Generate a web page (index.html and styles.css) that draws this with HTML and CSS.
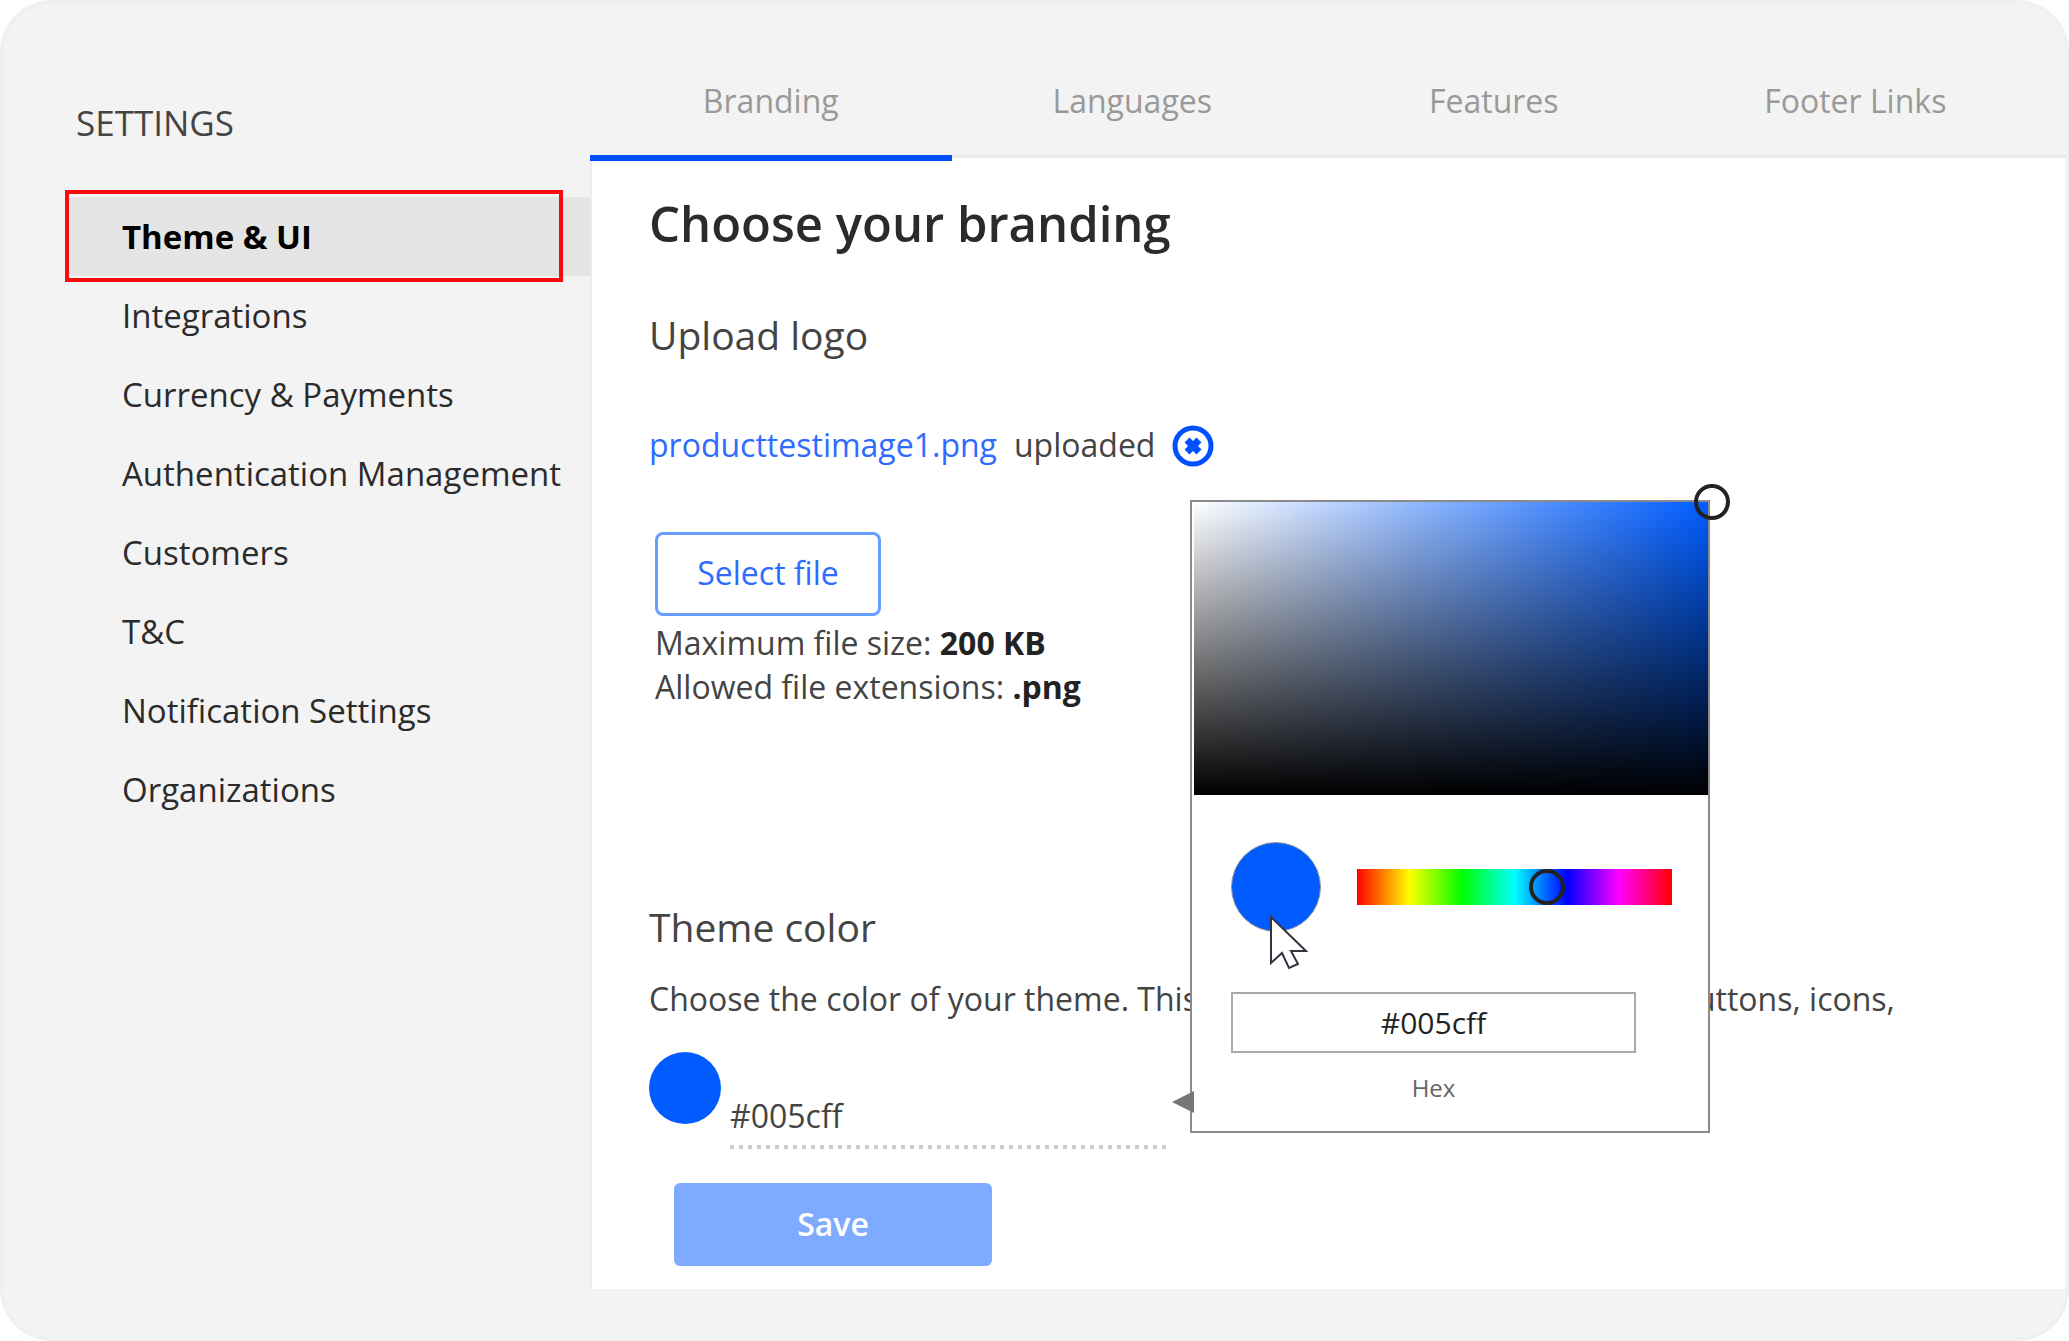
FILE: index.html
```html
<!DOCTYPE html>
<html lang="en">
<head>
    <meta charset="UTF-8">
    <meta name="viewport" content="width=device-width, initial-scale=1.0">
    <title>Settings - Theme &amp; UI</title>
    <link rel="stylesheet" href="styles.css">
</head>
<body>

<div class="page">
    <aside class="sidebar">
        <h2 class="sidebar-title">SETTINGS</h2>
        <nav class="menu">
            <a class="active" href="#theme">Theme &amp; UI</a>
            <a href="#integrations">Integrations</a>
            <a href="#currency">Currency &amp; Payments</a>
            <a href="#authentication">Authentication Management</a>
            <a href="#customers">Customers</a>
            <a href="#terms">T&amp;C</a>
            <a href="#notifications">Notification Settings</a>
            <a href="#organizations">Organizations</a>
        </nav>
    </aside>

    <main class="content">
        <nav class="tabs">
            <a class="active" href="#branding">Branding</a>
            <a href="#languages">Languages</a>
            <a href="#features">Features</a>
            <a href="#footer-links">Footer Links</a>
        </nav>

        <form class="panel">
            <h1>Choose your branding</h1>

            <h3>Upload logo</h3>
            <div class="uploaded">
                <a href="#logo">producttestimage1.png</a>
                <span>uploaded</span>
                <button type="button" class="remove" aria-label="Remove file">
                    <svg viewBox="0 0 42 42" width="42" height="42">
                        <circle cx="21" cy="21" r="18" fill="#fff" stroke="#0050ff" stroke-width="5"/>
                        <path d="M15 15l12 12M27 15L15 27" stroke="#0050ff" stroke-width="7"/>
                    </svg>
                </button>
            </div>
            <div class="upload">
                <button type="button" class="select-file">Select file</button>
                <p>Maximum file size: <strong>200 KB</strong></p>
                <p>Allowed file extensions: <strong>.png</strong></p>
            </div>

            <h3>Theme color</h3>
            <p class="description">Choose the color of your theme. This color will be applied to all main buttons, icons,</p>
            <div class="color-field">
                <button type="button" class="swatch" aria-label="Open color picker"></button>
                <input type="text" class="color-value" value="#005cff" aria-label="Theme color">

                <div class="picker">
                    <div class="shade">
                        <span class="shade-handle"></span>
                    </div>
                    <div class="picker-row">
                        <div class="preview">
                            <svg class="cursor" viewBox="0 0 40 58" width="40" height="58">
                                <path d="M2 2v46l11-10 7 15 9-4-7-13h15z" fill="#fff" stroke="#333340" stroke-width="2"/>
                            </svg>
                        </div>
                        <input type="range" class="hue" min="0" max="360" value="222" aria-label="Hue">
                    </div>
                    <div class="hex">
                        <input type="text" id="hex" value="#005cff">
                        <label for="hex">Hex</label>
                    </div>
                </div>
            </div>

            <button type="submit" class="save">Save</button>
        </form>
    </main>
</div>

</body>
</html>
```
FILE: styles.css
```css
* {
    margin: 0;
    padding: 0;
    box-sizing: border-box;
    font-family: 'Open Sans', sans-serif;
}
body {
    background: #fff;
    color: #444;
    font-size: 32px;
    line-height: 44px;
}
a {
    text-decoration: none;
}
button {
    cursor: pointer;
}
.page {
    display: flex;
    min-height: 100vh;
    padding-bottom: 48px;
    border: 4px solid #f0f0f0;
    border-right-width: 3px;
    border-radius: 52px;
    background: #f3f3f3;
}

/* Sidebar */
.sidebar {
    flex: 0 0 586px;
    padding: 97px 0 0 61px;
}
.sidebar-title {
    padding-left: 11px;
    font-size: 35px;
    font-weight: 400;
}
.menu {
    display: flex;
    flex-direction: column;
    margin-top: 52px;
}
.menu a {
    position: relative;
    height: 79px;
    padding-left: 57px;
    font-size: 33px;
    line-height: 79px;
    color: #2b2b2b;
    white-space: nowrap;
}
.menu .active {
    background: #e5e5e5;
    color: #000;
    font-weight: 700;
}
.menu .active::after {
    content: "";
    position: absolute;
    top: -7px;
    right: 27px;
    bottom: -6px;
    left: 0;
    border: 4px solid #fa0a0a;
}

/* Tabs */
.content {
    flex: 1;
    display: flex;
    flex-direction: column;
    min-width: 0;
}
.tabs {
    display: flex;
    padding-right: 30px;
    border-bottom: 3px solid #e9e9e9;
}
.tabs a {
    flex: 1;
    position: relative;
    padding: 75px 0 32px;
    text-align: center;
    color: #999;
}
.tabs .active {
    box-shadow: 0 6px 0 #0050ff;
}

/* Panel */
.panel {
    flex: 1;
    padding: 33px 58px 23px 57px;
    border-left: 2px solid #ececec;
    background: #fff;
}
h1 {
    font-size: 49px;
    line-height: 64px;
    font-weight: 600;
    color: #2b2b2b;
}
h3 {
    margin-top: 54px;
    font-size: 39px;
    line-height: 52px;
    font-weight: 400;
}
.uploaded {
    display: flex;
    align-items: flex-end;
    gap: 17px;
    margin-top: 62px;
}
.uploaded a {
    color: #2e6bff;
}
.remove {
    height: 42px;
    border: none;
    background: none;
}
.upload {
    margin: 65px 0 192px 6px;
}
.upload strong {
    color: #222;
}
.select-file {
    display: block;
    width: 226px;
    height: 84px;
    margin-bottom: 5px;
    padding-bottom: 3px;
    border: 3px solid #669dff;
    border-radius: 8px;
    background: #fff;
    color: #2e6bff;
    font-size: 32px;
}
.description {
    margin-top: 25px;
    line-height: 42px;
    white-space: nowrap;
}

/* Color field */
.color-field {
    position: relative;
    display: flex;
    align-items: flex-end;
    gap: 9px;
    width: 522px;
    height: 97px;
    margin-top: 32px;
}
.swatch {
    align-self: flex-start;
    width: 72px;
    height: 72px;
    border: none;
    border-radius: 50%;
    background: #005cff;
}
.color-value {
    flex: 1;
    min-width: 0;
    height: 56px;
    padding-bottom: 12px;
    border: none;
    background: repeating-linear-gradient(90deg, #ccc 0 4px, #fff 4px 9px) bottom / 100% 4px no-repeat;
    color: #444;
    font-size: 32px;
}

/* Color picker popup */
.picker {
    position: absolute;
    left: calc(100% + 19px);
    bottom: 16px;
    width: 520px;
    border: 2px solid #8a8a8a;
    background: #fff;
}
.picker::before {
    content: "";
    position: absolute;
    left: -20px;
    bottom: 18px;
    border-style: solid;
    border-width: 11px 22px 11px 0;
    border-color: transparent #777 transparent transparent;
}
.shade {
    position: relative;
    height: 293px;
    margin-left: 2px;
    background: linear-gradient(to top, #000, transparent), linear-gradient(to right, #fff, #005cff);
}
.shade-handle {
    position: absolute;
    top: -18px;
    right: -22px;
    width: 36px;
    height: 36px;
    border: 4px solid #222;
    border-radius: 50%;
}
.picker-row {
    display: flex;
    align-items: center;
    gap: 36px;
    padding: 47px 36px 0 39px;
}
.preview {
    position: relative;
    flex: 0 0 90px;
    height: 90px;
    border: 1px solid #999;
    border-radius: 50%;
    background: #005cff;
}
.cursor {
    position: absolute;
    top: 72px;
    left: 37px;
}
.hue {
    flex: 1;
    min-width: 0;
    height: 36px;
    -webkit-appearance: none;
    appearance: none;
    background: linear-gradient(to right, #f00, #ff0, #0f0, #0ff, #00f, #f0f, #f00);
}
.hue::-webkit-slider-thumb {
    -webkit-appearance: none;
    width: 36px;
    height: 36px;
    border: 4px solid #222;
    border-radius: 50%;
    background: transparent;
}
.hex {
    display: flex;
    flex-direction: column;
    gap: 18px;
    margin: 60px 72px 26px 39px;
    text-align: center;
}
.hex input {
    width: 100%;
    height: 61px;
    border: 2px solid #aaa;
    background: #fff;
    color: #222;
    font-size: 30px;
    text-align: center;
}
.hex label {
    font-size: 24px;
    line-height: 34px;
    color: #666;
}

.save {
    display: block;
    width: 318px;
    height: 83px;
    margin: 34px 0 0 25px;
    padding-bottom: 3px;
    border: none;
    border-radius: 6px;
    background: #7eabff;
    color: #fff;
    font-size: 32px;
    font-weight: 600;
}
```
